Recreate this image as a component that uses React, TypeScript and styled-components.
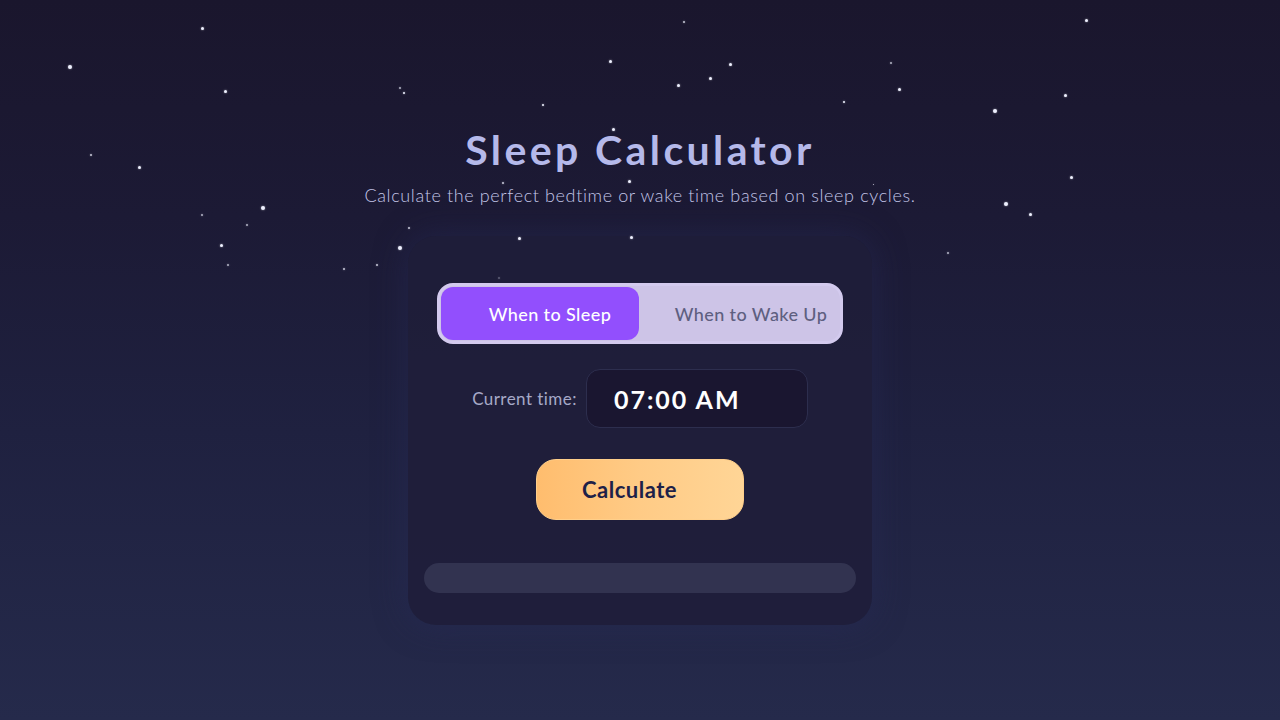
import { useState } from "react"
import styled, { createGlobalStyle } from "styled-components"

const FONT = `"Lato", "Open Sans", sans-serif`

// x, y, size, opacity
const STARS: [number, number, number, number][] = [
  [202, 28, 3, 1], [70, 67, 4, 1], [225, 91, 3, 1], [91, 155, 2, 0.8], [139, 167, 3, 1],
  [263, 208, 4, 1], [202, 215, 2, 0.7], [247, 225, 2, 0.7], [221, 245, 3, 1], [228, 265, 2, 0.7],
  [344, 269, 2, 0.8], [377, 265, 2, 0.8], [400, 248, 4, 1], [409, 228, 2, 0.8], [400, 88, 2, 0.7],
  [404, 93, 2, 1], [543, 105, 2, 1], [610, 61, 3, 1], [684, 22, 2, 0.8], [678, 85, 3, 1],
  [710, 78, 3, 1], [730, 64, 3, 1], [613, 129, 3, 1], [629, 181, 3, 1], [503, 183, 2, 0.8],
  [519, 238, 3, 1], [631, 237, 3, 1], [499, 278, 2, 0.3], [844, 102, 2, 1], [891, 63, 2, 0.7],
  [899, 89, 3, 1], [995, 111, 4, 1], [1065, 95, 3, 1], [1086, 20, 3, 1], [1071, 177, 3, 1],
  [873, 184, 1, 0.8], [1006, 204, 4, 1], [1030, 214, 3, 1], [948, 253, 2, 0.7],
]

const GlobalStyle = createGlobalStyle`
  html, body {
    margin: 0;
    padding: 0;
  }
  body {
    font-family: ${FONT};
    background: #1a162d;
  }
  * {
    box-sizing: border-box;
  }
`

const App = () => {
  const [mode, setMode] = useState<"sleep" | "wake">("sleep")

  return (
    <StyledPage>
      <GlobalStyle />
      <StyledHeader>
        <StyledTitle>Sleep Calculator</StyledTitle>
        <StyledSubtitle>
          Calculate the perfect bedtime or wake time based on sleep cycles.
        </StyledSubtitle>
      </StyledHeader>
      <StyledCard>
        <StyledToggle>
          <StyledToggleButton
            $active={mode === "sleep"}
            onClick={() => setMode("sleep")}
          >
            When to Sleep
          </StyledToggleButton>
          <StyledToggleButton
            $active={mode === "wake"}
            onClick={() => setMode("wake")}
          >
            When to Wake Up
          </StyledToggleButton>
        </StyledToggle>
        <StyledTimeRow>
          <StyledLabel>Current time:</StyledLabel>
          <StyledTimeBox>07:00 AM</StyledTimeBox>
        </StyledTimeRow>
        <StyledCalcButton>Calculate</StyledCalcButton>
        <StyledResultBar />
      </StyledCard>
      <StyledSky>
        {STARS.map(([x, y, s, o], i) => (
          <StyledStar
            key={i}
            style={{ left: x - s / 2, top: y - s / 2, width: s, height: s, opacity: o }}
          />
        ))}
      </StyledSky>
    </StyledPage>
  )
}

export default App

const StyledPage = styled.div`
  position: relative;
  min-height: 720px;
  overflow: hidden;
  background: linear-gradient(180deg, #1a162d 0%, #1c1a35 30%, #1f2140 60%, #252a4b 100%);
  display: flex;
  flex-direction: column;
  align-items: center;
  padding-top: 124px;
`
const StyledSky = styled.div`
  position: absolute;
  inset: 0;
  z-index: 2;
  pointer-events: none;
`
const StyledStar = styled.span`
  position: absolute;
  border-radius: 50%;
  background: #eef0ff;
  box-shadow: 0 0 2px rgba(255, 255, 255, 0.6);
`
const StyledHeader = styled.header`
  position: relative;
  display: flex;
  flex-direction: column;
  align-items: center;
  gap: 8px;
`
const StyledTitle = styled.h1`
  margin: 0;
  font-size: 41px;
  font-weight: 700;
  letter-spacing: 3.4px;
  line-height: 52px;
  color: #b5b9ea;
`
const StyledSubtitle = styled.p`
  margin: 0;
  font-size: 18px;
  font-weight: 300;
  letter-spacing: 0.62px;
  color: #c3c6e8;
`
const StyledCard = styled.main`
  position: relative;
  z-index: 1;
  margin-top: 30px;
  width: 464px;
  padding: 47px 16px 32px;
  border-radius: 28px;
  background: rgba(31, 30, 58, 0.9);
  box-shadow: 0 0 32px rgba(40, 44, 90, 0.5);
  display: flex;
  flex-direction: column;
  align-items: center;
`
const StyledToggle = styled.div`
  width: 406px;
  height: 61px;
  padding: 1px;
  border: 3px solid #d3caee;
  border-radius: 16px;
  background: #cdc4e7;
  display: grid;
  grid-template-columns: 198px 1fr;
`
const StyledToggleButton = styled.button<{ $active: boolean }>`
  border: none;
  border-radius: 12px;
  padding: 0 0 0 ${p => (p.$active ? 20 : 24)}px;
  font-family: ${FONT};
  font-size: 18px;
  font-weight: 500;
  letter-spacing: 0.4px;
  cursor: pointer;
  background: ${p => (p.$active ? "#924ffd" : "transparent")};
  color: ${p => (p.$active ? "#ffffff" : "#5e5f80")};
`
const StyledTimeRow = styled.div`
  margin-top: 25px;
  display: flex;
  align-items: center;
  gap: 9px;
`
const StyledLabel = styled.span`
  font-size: 17px;
  font-weight: 400;
  letter-spacing: 0.45px;
  color: #a6a9c7;
`
const StyledTimeBox = styled.div`
  width: 222px;
  height: 59px;
  padding-left: 27px;
  display: flex;
  align-items: center;
  border-radius: 14px;
  border: 1px solid #2d2e4e;
  background: #1a1630;
  color: #ffffff;
  font-size: 25px;
  font-weight: 700;
  letter-spacing: 2px;
`
const StyledCalcButton = styled.button`
  margin-top: 31px;
  width: 208px;
  height: 61px;
  padding: 0 21px 0 0;
  border-radius: 20px;
  border: 1px solid #ffcf8a;
  background: linear-gradient(90deg, #ffbd6e 0%, #ffcb86 50%, #ffd596 100%);
  color: #1e2148;
  font-family: ${FONT};
  font-size: 22px;
  font-weight: 700;
  letter-spacing: 0.5px;
  cursor: pointer;
`
const StyledResultBar = styled.div`
  margin-top: 43px;
  width: 100%;
  height: 30px;
  border-radius: 15px;
  background: #323350;
`
